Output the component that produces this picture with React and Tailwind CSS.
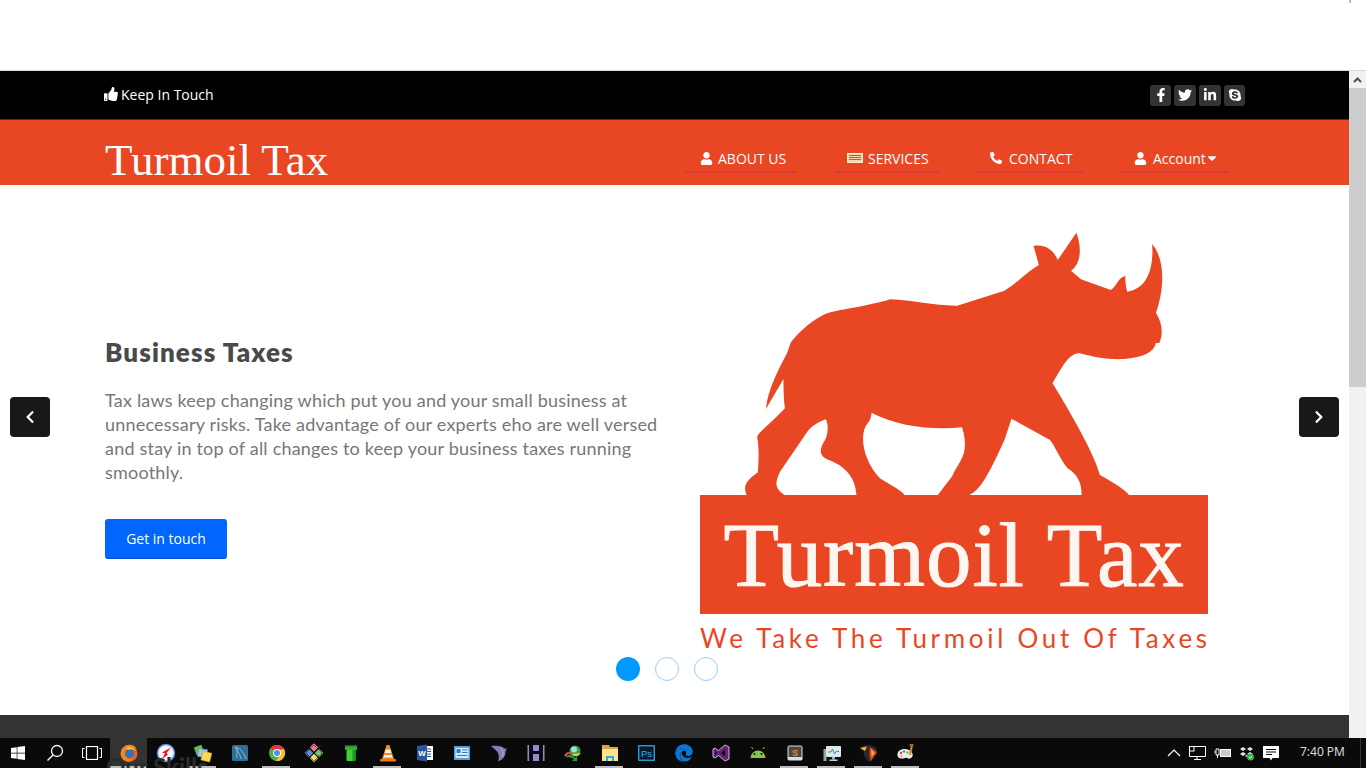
import React from "react";
import { FaThumbsUp, FaUser, FaPhoneAlt, FaCaretDown, FaFacebookF, FaTwitter, FaLinkedinIn, FaSkype, FaChevronLeft, FaChevronRight, FaWindows, FaEdge } from "react-icons/fa";

const RHINO = "M245,567 C250,510 280,450 305,400 L315,370 C330,345 380,295 420,280 C470,265 520,262 600,238 C660,240 730,258 790,257 L925,212 C960,190 990,155 1023,135 L1008,78 C1040,72 1065,90 1077,120 L1130,38 C1145,80 1145,130 1115,152 L1143,178 L1228,210 C1245,200 1250,170 1270,168 C1268,190 1275,215 1275,215 C1340,205 1350,130 1346,72 C1385,120 1380,210 1357,278 C1375,310 1378,340 1367,368 L1356,370 C1350,410 1280,420 1230,417 C1190,415 1160,405 1140,400 C1110,400 1095,430 1062,490 C1120,590 1180,700 1197,765 C1240,790 1270,810 1280,825 L1145,825 C1145,790 1135,765 1105,745 C1085,720 1070,680 1055,660 L945,596 L925,660 C890,740 860,810 825,825 L735,825 C760,790 775,770 775,770 C790,735 815,710 812,670 C812,650 808,635 804,622 C720,630 620,620 546,578 C545,600 535,610 535,610 C510,640 520,720 570,775 C600,795 630,810 640,825 L503,825 C500,770 470,740 430,722 C395,710 398,690 408,670 C422,650 425,620 416,598 C395,605 375,620 365,632 L285,755 C270,790 270,805 298,825 L190,825 C180,800 185,785 222,757 C225,710 225,680 220,650 C225,635 270,600 299,565 C295,530 295,500 295,477 Z";

const Svg = ({ children, w = 20, h = 20, vb = "0 0 20 20" }) => (
  <svg width={w} height={h} viewBox={vb} className="block">{children}</svg>
);

const icons = {
  firefox: (
    <Svg><circle cx="10" cy="10.5" r="8.5" fill="#e8611f" /><circle cx="10.5" cy="10.5" r="4.6" fill="#3a6fb5" /><path d="M3 6 C6 1 14 0 18 6 C15 4 12 5 11 6 C8 5 6 7 6 11 C6 15 10 17 14 16 C11 20 4 19 2 13 C1.500 10 2 8 3 6Z" fill="#f08a1d" /><path d="M7 5 C10 3 15 4 17 8 C14 6 11 6 9 7Z" fill="#f7c22f" /></Svg>
  ),
  compass: (
    <Svg><circle cx="10" cy="10" r="8.500" fill="#f4f6fa" stroke="#5b8fd6" strokeWidth="1.500" /><path d="M15 4.500 L6 9.500 L9 10.500 L6 16 L12 11.500 L10.500 10 Z" fill="#e8141c" /></Svg>
  ),
  files: (
    <Svg><rect x="2" y="3" width="8" height="8" fill="#6dbd45" transform="rotate(-20 6 7)" /><rect x="5" y="6" width="9" height="8" fill="#9fc6ee" stroke="#5c8dc5" strokeWidth=".6" transform="rotate(8 9 10)" /><rect x="9" y="9" width="9" height="9" fill="#f6d957" stroke="#c9a93a" strokeWidth=".6" transform="rotate(14 13 13)" /></Svg>
  ),
  mysql: (
    <Svg><rect x="2" y="2" width="16" height="16" rx="1.500" fill="#2c6f97" /><path d="M5 4 C9 4 14 9 16 16 M5 4 C7 8 10 10 11 16 M7 5 C8 10 6 12 7 15" fill="none" stroke="#a9c6d8" strokeWidth=".8" /></Svg>
  ),
  chrome: (
    <Svg><circle cx="10" cy="10" r="8" fill="#4caf50" /><path d="M10 2 A8 8 0 0 1 17 6 L10 6 A4 4 0 0 0 6.500 8 L3.200 5.500 A8 8 0 0 1 10 2Z" fill="#e53935" /><path d="M17 6 A8 8 0 0 1 9 18 L13 12 L13 7 Z" fill="#fbc02d" /><circle cx="10" cy="10" r="4" fill="#fff" /><circle cx="10" cy="10" r="3" fill="#4f8fe8" /></Svg>
  ),
  kraken: (
    <Svg><rect x="7" y="1.500" width="6" height="6" fill="#ee7f8a" transform="rotate(45 10 4.500)" /><rect x="2" y="7" width="6" height="6" fill="#5b8fd9" transform="rotate(45 5 10)" /><rect x="12" y="7" width="6" height="6" fill="#7cc46a" transform="rotate(45 15 10)" /><rect x="7" y="12" width="6" height="6" fill="#f3dc6b" transform="rotate(45 10 15)" /><path d="M10 2 L18 10 L10 18 L2 10Z" fill="none" stroke="#222" strokeWidth=".6" /></Svg>
  ),
  pipe: (
    <Svg><rect x="4" y="2" width="12" height="5" rx="1" fill="#2fb52f" /><rect x="4" y="2" width="12" height="1.500" fill="#14691a" /><rect x="5.500" y="7" width="9" height="11" rx="1" fill="#3ed13e" /><rect x="11.500" y="7" width="3" height="11" fill="#1f9a25" /></Svg>
  ),
  vlc: (
    <Svg><path d="M8.500 2 L11.500 2 L16 16 L4 16Z" fill="#f08c17" /><path d="M7.800 6.500 L12.200 6.500 L13.200 10 L6.800 10Z" fill="#f3f3f3" /><path d="M6.200 12 L13.800 12 L14.500 14.500 L5.500 14.500Z" fill="#f3f3f3" /><rect x="2" y="16" width="16" height="2.500" rx="1" fill="#e9791a" /></Svg>
  ),
  word: (
    <Svg><rect x="8" y="3" width="10" height="14" fill="#fff" /><path d="M10 6h6M10 8.500h6M10 11h6M10 13.500h6" stroke="#2b579a" strokeWidth="1" /><path d="M2 3 L12 1.500 L12 18.500 L2 17Z" fill="#2b579a" /><text x="3.200" y="13.200" fontSize="8" fontWeight="700" fill="#fff" fontFamily="Liberation Sans, sans-serif">W</text></Svg>
  ),
  ms: (
    <Svg><rect x="2" y="3" width="16" height="14" fill="#4aa3e0" /><rect x="3.500" y="5" width="13" height="10" fill="#d7ecfa" /><rect x="4.500" y="6" width="4" height="4" fill="#2e7fbf" /><path d="M10 7h5.500M10 9.500h5.500M5 12.500h10.500" stroke="#2e7fbf" strokeWidth="1" /></Svg>
  ),
  dolphin: (
    <Svg><path d="M2 3 C7 2 14 3 16 6 L18 5 L16.500 9 C16.500 14 13 17 9 18.500 C10.500 15 10 12 8.500 9 C7 7 4 5 2 3Z" fill="#8080b8" /><path d="M11 5 C14 7 15 10 13 14" stroke="#b3b3d9" strokeWidth="1" fill="none" /></Svg>
  ),
  bars: (
    <Svg><rect x="1.500" y="2" width="1.500" height="16" fill="#8f8fd0" /><rect x="7" y="2" width="6" height="6" fill="#8f8fd0" /><rect x="7" y="11" width="6" height="7" fill="#8f8fd0" /><rect x="17" y="2" width="1.500" height="16" fill="#8f8fd0" /></Svg>
  ),
  idm: (
    <Svg><circle cx="12" cy="8" r="5.500" fill="#3f9a52" /><circle cx="11" cy="6.500" r="3" fill="#a7d8e8" /><path d="M1 13 C3 8 7 8 9 11 L7 11.500 C6 10.500 4.500 11 3.500 13.500 Z" fill="#e2502b" /><path d="M3.500 13.500 C6 11 9 12 12 15 L14 13 L14 18 L9 18 L11 16 C8 14 6 14 3.500 14.500Z" fill="#2f9d3f" /><path d="M9 11 L18 10 L15 13 L11 13Z" fill="#f2c230" /></Svg>
  ),
  folder: (
    <Svg><path d="M2 2 L9 2 L10 4 L18 4 L18 8 L2 8Z" fill="#d9a93c" /><rect x="2" y="6" width="16" height="12" fill="#ffe28a" /><path d="M6 18 L6 13 L14 13 L14 18 L12 18 L12 15 L8 15 L8 18Z" fill="#2aa7e8" /></Svg>
  ),
  ps: (
    <Svg><rect x="1.750" y="2.750" width="15.500" height="14.500" fill="#0a1b2e" stroke="#2fb4f0" strokeWidth="1.200" /><text x="4" y="13.500" fontSize="9.500" fill="#2fb4f0" fontFamily="Liberation Sans, sans-serif">Ps</text></Svg>
  ),
  vs: (
    <Svg><path d="M14 2 L18 4 L18 16 L14 18 L7.500 12.500 L4 15 L2 14 L2 6 L4 5 L7.500 7.500Z" fill="#68217a" stroke="#fff" strokeWidth=".7" /><path d="M14 6.500 L10 10 L14 13.500Z M4 8 L6 10 L4 12Z" fill="#0a0a0a" /></Svg>
  ),
  android: (
    <Svg><path d="M2.500 15 A7.500 7.500 0 0 1 17.500 15Z" fill="#8bc34a" /><path d="M5 6 L3.500 4 M15 6 L16.500 4" stroke="#8bc34a" strokeWidth="1" /><circle cx="6.500" cy="11" r="1" fill="#0a0a0a" /><circle cx="13.500" cy="11" r="1" fill="#0a0a0a" /></Svg>
  ),
  sublime: (
    <Svg><rect x="3" y="3" width="14" height="14" rx="1" fill="#4a4a4a" stroke="#ddd" strokeWidth="1" /><rect x="3" y="14" width="14" height="3" fill="#ddd" /><text x="7" y="12.500" fontSize="9" fontWeight="700" fill="#f08a1d" fontFamily="Liberation Sans, sans-serif">S</text></Svg>
  ),
  monitor: (
    <Svg><rect x="1.500" y="6" width="3" height="12" fill="#9aa5a5" /><rect x="4" y="3" width="15" height="11" rx="1" fill="#dfe7ea" /><path d="M6 9 L9 9 L10.500 6 L12.500 11 L14 8.500 L17 8.500" fill="none" stroke="#2f8fc9" strokeWidth="1" /><rect x="10" y="14" width="3" height="2.500" fill="#aaa" /><rect x="7.500" y="16.500" width="8" height="1.500" fill="#ccc" /></Svg>
  ),
  bird: (
    <Svg><path d="M1 5 C5 1 12 1 17 5 L18 11 L11 19 C7 17 4 12 5 8 Z" fill="#2a2a2a" /><path d="M1 5 L8 3.500 L6 8 Z" fill="#f5b921" /><path d="M11 4 L18 9 L12 18 C10 13 10 8 11 4Z" fill="#d8402a" /><path d="M12 6 L16 10 L12.500 14Z" fill="#f1a520" /></Svg>
  ),
  palette: (
    <Svg><path d="M1.500 11 C2 6 9 5 13 7 C17 9 18 13 15 15 C12 17 12 14 9 15 C6 16 1 16 1.500 11Z" fill="#e8eef2" /><circle cx="5" cy="10" r="1.200" fill="#e53935" /><circle cx="8" cy="8.500" r="1.200" fill="#2f8fe0" /><circle cx="11.500" cy="9.500" r="1.200" fill="#6dbd45" /><circle cx="5.500" cy="13" r="1.200" fill="#f5b921" /><path d="M14 12 L16 2" stroke="#d98a2b" strokeWidth="2" /><rect x="13.500" y="1" width="4" height="2" fill="#8f6a3a" /></Svg>
  ),
};

const taskItems = [
  { i: "firefox", active: true },
  { i: "compass" },
  { i: "files", line: true },
  { i: "mysql" },
  { i: "chrome", line: true },
  { i: "kraken" },
  { i: "pipe" },
  { i: "vlc", line: true },
  { i: "word" },
  { i: "ms" },
  { i: "dolphin" },
  { i: "bars" },
  { i: "idm" },
  { i: "folder", line: true },
  { i: "ps" },
  { i: "edge" },
  { i: "vs" },
  { i: "android" },
  { i: "sublime", line: true },
  { i: "monitor", line: true },
  { i: "bird", line: true },
  { i: "palette", line: true },
];

const NavItem = ({ icon, label, caret, cls }) => (
  <a className={`flex items-center h-[28px] border-b-2 border-[#e03a38] text-white text-[14px] ${cls}`}>
    {icon}
    <span>{label}</span>
    {caret && <FaCaretDown className="text-[14px] -ml-[7px]" />}
  </a>
);

const Social = ({ icon, cls }) => (
  <a className={`flex items-center justify-center h-[21px] bg-[#333333] rounded-[3px] text-white text-[14px] ${cls}`}>{icon}</a>
);

const ServicesIcon = () => (
  <svg width="16" height="10" viewBox="0 0 16 10" className="block">
    <rect x=".5" y=".5" width="15" height="9" fill="#f6d9a8" stroke="#ffe9d0" strokeWidth="1" />
    <path d="M2 2.500h12M2 4.500h12M2 6.500h12" stroke="#e94724" strokeWidth="1" />
  </svg>
);

export default function App() {
  return (
    <div className="h-[768px] w-[1366px] overflow-hidden flex flex-col bg-white relative font-['Open_Sans',sans-serif]">
      <div className="h-[71px] shrink-0 border-b border-[#d9d9d9] bg-white flex justify-end">
        <div className="w-[17px] h-[3px]"><div className="w-[2px] h-[3px] bg-[#bbbbbb]"></div></div>
      </div>

      <div className="flex h-[667px] shrink-0">
        <div className="w-[1349px] flex flex-col">
          <div className="h-[49px] shrink-0 bg-black border-b border-[#1f3a5c] flex items-center justify-between pl-[104px] pr-[104px]">
            <div className="flex items-center gap-[3px] text-white text-[14px] mb-[2px]">
              <FaThumbsUp className="text-[14px]" />
              <span>Keep In Touch</span>
            </div>
            <div className="flex gap-[3px]">
              <Social cls="w-[21px]" icon={<FaFacebookF />} />
              <Social cls="w-[22px]" icon={<FaTwitter />} />
              <Social cls="w-[22px]" icon={<FaLinkedinIn />} />
              <Social cls="w-[21px]" icon={<FaSkype />} />
            </div>
          </div>

          <div className="h-[65px] shrink-0 bg-[#e94724] flex items-end justify-between pl-[105px] pr-[120px]">
            <div className="font-['Liberation_Serif',serif] text-white text-[45px] leading-[50px] h-[50px]">Turmoil Tax</div>
            <nav className="flex gap-[37px] mb-[12px]">
              <NavItem cls="w-[112px] mr-[1px] pl-[15px] gap-[5px]" icon={<FaUser className="text-[13px]" />} label="ABOUT US" />
              <NavItem cls="w-[104px] pl-[12px] gap-[5px]" icon={<ServicesIcon />} label="SERVICES" />
              <NavItem cls="w-[107px] pl-[14px] gap-[7px]" icon={<FaPhoneAlt className="text-[12px]" />} label="CONTACT" />
              <NavItem cls="w-[109px] pl-[14px] gap-[6px]" icon={<FaUser className="text-[13px]" />} label="Account" caret />
            </nav>
          </div>

          <div className="h-[530px] shrink-0 bg-white relative flex pl-[105px]">
            <div className="w-[575px] shrink-0 flex flex-col pt-[152px]">
              <h2 className="font-['Lato',sans-serif] font-extrabold text-[26px] leading-[30px] tracking-[1.100px] text-[#4a4a4a]">Business Taxes</h2>
              <p className="font-['Lato',sans-serif] text-[18px] leading-[24px] text-[#777777] mt-[21px] w-[565px] tracking-[.2px]">
                Tax laws keep changing which put you and your small business at unnecessary risks. Take advantage of our experts eho are well versed and stay in top of all changes to keep your business taxes running smoothly.
              </p>
              <a className="mt-[35px] flex items-center justify-center w-[122px] h-[40px] rounded-[3px] bg-[#0066ff] border-b border-[#0052cc] text-white text-[14px]">Get in touch</a>
            </div>
            <div className="w-[550px] shrink-0 pt-[35px] flex flex-col">
              <svg width="550" height="275" viewBox="0 0 1568 825" preserveAspectRatio="none" className="block shrink-0">
                <path d={RHINO} fill="#e94724" />
              </svg>
              <div className="ml-[20px] w-[508px] h-[119px] shrink-0 bg-[#e94724] flex justify-center items-start">
                <span className="font-['Liberation_Serif',serif] text-[#fff6f2] text-[91px] leading-[104px] mt-[9px] tracking-[.9px] whitespace-nowrap [-webkit-text-stroke:1px_#fff6f2]">Turmoil Tax</span>
              </div>
              <div className="ml-[20px] w-[510px] mt-[8px] font-['Lato',sans-serif] text-[#e94724] text-[26px] leading-[32px] tracking-[3.700px] whitespace-nowrap">We Take The Turmoil Out Of Taxes</div>
            </div>

            <a className="absolute left-[10px] top-[212px] w-[40px] h-[40px] rounded-[4px] bg-[#181818] flex items-center justify-center text-white text-[14px]"><FaChevronLeft /></a>
            <a className="absolute left-[1299px] top-[212px] w-[40px] h-[40px] rounded-[4px] bg-[#181818] flex items-center justify-center text-white text-[14px]"><FaChevronRight /></a>
            <div className="absolute left-[616px] top-[472px] flex gap-[15px]">
              <span className="w-[24px] h-[24px] rounded-full bg-[#0099ff]"></span>
              <span className="w-[24px] h-[24px] rounded-full bg-white border border-[#99ccff]"></span>
              <span className="w-[24px] h-[24px] rounded-full bg-white border border-[#99ccff]"></span>
            </div>
          </div>

          <div className="flex-1 bg-[#333333]"></div>
        </div>

        <div className="w-[17px] shrink-0 bg-[#f1f1f1] flex flex-col">
          <div className="h-[17px] shrink-0 flex items-center justify-center">
            <svg width="9" height="6" viewBox="0 0 9 6"><path d="M1 5 L4.500 1.500 L8 5" fill="none" stroke="#505050" strokeWidth="2" /></svg>
          </div>
          <div className="h-[299px] shrink-0 bg-[#cdcdcd]"></div>
        </div>
      </div>

      <div className="h-[30px] shrink-0 bg-[#0a0a0a] relative flex items-stretch">
        <div className="w-[36px] flex items-center justify-center text-white text-[16px]"><FaWindows /></div>
        <div className="w-[37px] flex items-center justify-center">
          <svg width="18" height="18" viewBox="0 0 18 18"><circle cx="11" cy="7" r="5.500" fill="none" stroke="#fff" strokeWidth="1.300" /><path d="M7 11 L1.500 16.500" stroke="#fff" strokeWidth="1.500" /></svg>
        </div>
        <div className="w-[37px] flex items-center justify-center">
          <svg width="20" height="14" viewBox="0 0 20 14"><rect x="4.500" y=".5" width="11" height="13" fill="none" stroke="#fff" strokeWidth="1.200" /><path d="M2.500 2.500 H.5 V11.500 H2.500 M17.500 2.500 H19.500 V11.500 H17.500" fill="none" stroke="#fff" strokeWidth="1" /></svg>
        </div>
        {taskItems.map((t, n) => (
          <div key={n} className={`w-[37px] shrink-0 relative flex items-center justify-center ${t.active ? "bg-[#333333]" : ""}`}>
            {t.i === "edge" ? <FaEdge className="text-[#0a78d7] text-[18px]" /> : icons[t.i]}
            {t.active && <span className="absolute left-0 bottom-0 w-[36px] h-[2px] bg-[#bbbbbb]"></span>}
            {t.line && <span className="absolute left-[4px] bottom-0 w-[28px] h-[2px] bg-[#bbbbbb]"></span>}
          </div>
        ))}
        <span className="absolute left-[106px] top-[15px] font-['Lato',sans-serif] font-bold text-[24px] leading-[28px] text-[#2b2b2b]">Our Skills</span>
        <div className="flex items-center gap-[8px] absolute left-[1167px] top-0 h-full">
          <svg width="14" height="8" viewBox="0 0 14 8"><path d="M1 7 L7 1 L13 7" fill="none" stroke="#fff" strokeWidth="1.200" /></svg>
          <svg width="17" height="14" viewBox="0 0 17 14"><path d="M4.500 .5 H16.500 V10.500 H.5 V5" fill="none" stroke="#fff" /><rect x=".5" y=".5" width="4.500" height="4.500" fill="#0a0a0a" stroke="#fff" /><path d="M8 10.500 V13 M5 13.500 H12" stroke="#fff" /></svg>
          <svg width="17" height="12" viewBox="0 0 17 12"><path d="M0 5 H2 M2 2 V8 H5 V2 Z M3.500 8 V11" fill="none" stroke="#fff" /><rect x="6.500" y="2.500" width="10" height="7" fill="#cccccc" stroke="#fff" /></svg>
          <svg width="16" height="16" viewBox="0 0 16 16"><path d="M4 2 L7 4 L4 6 L1 4Z M11 2 L14 4 L11 6 L8 4Z M4 7 L7 9 L4 11 L1 9Z M11 7 L14 9 L11 11 L8 9Z M7.500 10 L9 11 L7.500 12 L6 11Z" fill="#e8e8e8" /><circle cx="11.500" cy="12" r="3.500" fill="#2fb344" /><path d="M9.800 12 L11 13.200 L13.200 10.800" fill="none" stroke="#fff" /></svg>
          <svg width="16" height="15" viewBox="0 0 16 15"><path d="M0 0 H16 V12 H9.500 L8 14.500 L6.500 12 H0Z" fill="#fff" /><path d="M3 3.500 H13 M3 6 H13 M3 8.500 H9" stroke="#0a0a0a" /></svg>
        </div>
        <span className="absolute left-[1300px] top-[6px] text-[12px] leading-[16px] text-[#e0e0e0] font-['Open_Sans',sans-serif]">7:40 PM</span>
        <span className="absolute left-[1360px] top-0 h-full w-px bg-[#333333]"></span>
      </div>
    </div>
  );
}
